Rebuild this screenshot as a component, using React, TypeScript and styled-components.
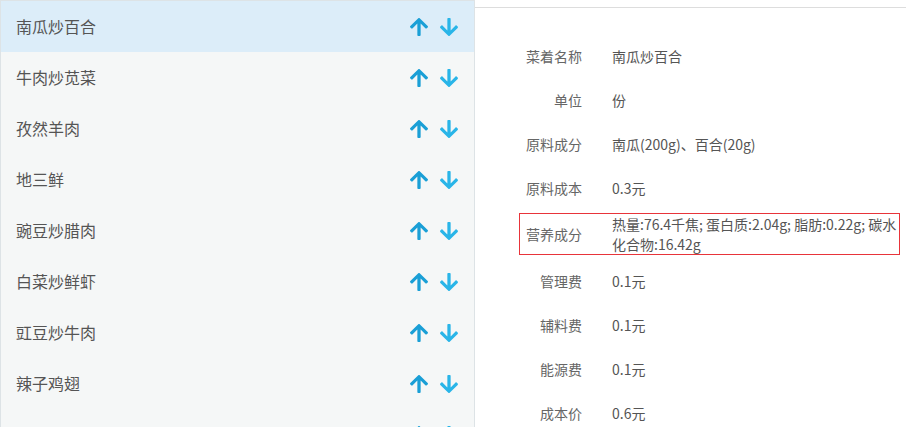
import React from "react";
import styled, { createGlobalStyle } from "styled-components";

const Global = createGlobalStyle`
  html, body { margin: 0; padding: 0; background: #fff; overflow: hidden; }
  body { font-family: "Noto Sans CJK SC", "Noto Sans", sans-serif; }
`;

const Page = styled.div`
  display: flex;
  width: 906px;
  height: 427px;
  overflow: hidden;
`;

const ListPanel = styled.div`
  width: 473px;
  flex: none;
  background: #f5f7f7;
  border: 1px solid #dde3e6;
  border-bottom: none;
  display: flex;
  flex-direction: column;
`;

const Item = styled.div<{ $active?: boolean }>`
  height: 51px;
  flex: none;
  box-sizing: border-box;
  display: flex;
  align-items: center;
  padding: 0 16px 2px 15px;
  background: ${(p) => (p.$active ? "#dcedf9" : "transparent")};
`;

const ItemName = styled.span`
  flex: 1;
  font-size: 16px;
  color: #555;
`;

const ArrowBtn = styled.span<{ $color: string }>`
  display: inline-flex;
  width: 18px;
  height: 18px;
  margin-left: 12px;
  margin-top: 2px;
  color: ${(p) => p.$color};
  svg { width: 18px; height: 18px; display: block; }
`;

const DetailPanel = styled.div`
  flex: 1;
  display: flex;
  flex-direction: column;
`;

const TopBar = styled.div`
  height: 7px;
  border-bottom: 1px solid #dddddd;
  flex: none;
`;

const Form = styled.div`
  display: flex;
  flex-direction: column;
  padding: 26px 0 0 44px;
`;

const Row = styled.div<{ $highlight?: boolean }>`
  display: flex;
  width: ${(p) => (p.$highlight ? "379px" : "381px")};
  font-size: 14px;
  line-height: 20px;
  padding: ${(p) => (p.$highlight ? "0" : "12px 0")};
  margin: ${(p) => (p.$highlight ? "3px 0 4px" : "0")};
  border: ${(p) => (p.$highlight ? "1px solid #e8343a" : "none")};
`;

const Label = styled.div<{ $highlight?: boolean }>`
  width: ${(p) => (p.$highlight ? "62px" : "63px")};
  flex: none;
  text-align: right;
  color: #666;
  align-self: ${(p) => (p.$highlight ? "center" : "auto")};
`;

const Value = styled.div`
  flex: 1;
  margin-left: 30px;
  color: #555;
  padding-right: 2px;
`;

const ArrowUp = () => (
  <svg viewBox="5 32 438 448" preserveAspectRatio="none">
    <path
      fill="currentColor"
      d="M34.9 289.5l-22.2-22.2c-9.4-9.4-9.4-24.6 0-33.9L207 39c9.4-9.4 24.6-9.4 33.9 0l194.3 194.3c9.4 9.4 9.4 24.6 0 33.9L413 289.4c-9.5 9.5-25 9.3-34.3-.4L264 168.6V456c0 13.3-10.7 24-24 24h-32c-13.3 0-24-10.7-24-24V168.6L69.2 289.1c-9.3 9.8-24.8 10-34.3.4z"
    />
  </svg>
);

const ArrowDown = () => (
  <svg viewBox="5 32 438 448" preserveAspectRatio="none">
    <path
      fill="currentColor"
      d="M413.1 222.5l22.2 22.2c9.4 9.4 9.4 24.6 0 33.9L241 473c-9.4 9.4-24.6 9.4-33.9 0L12.7 278.6c-9.4-9.4-9.4-24.6 0-33.9l22.2-22.2c9.5-9.5 25-9.3 34.3.4L184 343.4V56c0-13.3 10.7-24 24-24h32c13.3 0 24 10.7 24 24v287.4l114.8-120.5c9.3-9.8 24.8-10 34.3-.4z"
    />
  </svg>
);

const dishes = [
  "南瓜炒百合",
  "牛肉炒苋菜",
  "孜然羊肉",
  "地三鲜",
  "豌豆炒腊肉",
  "白菜炒鲜虾",
  "豇豆炒牛肉",
  "辣子鸡翅",
  "青椒土豆丝",
];

const fields: { label: string; value: string; highlight?: boolean }[] = [
  { label: "菜着名称", value: "南瓜炒百合" },
  { label: "单位", value: "份" },
  { label: "原料成分", value: "南瓜(200g)、百合(20g)" },
  { label: "原料成本", value: "0.3元" },
  { label: "营养成分", value: "热量:76.4千焦; 蛋白质:2.04g; 脂肪:0.22g; 碳水化合物:16.42g", highlight: true },
  { label: "管理费", value: "0.1元" },
  { label: "辅料费", value: "0.1元" },
  { label: "能源费", value: "0.1元" },
  { label: "成本价", value: "0.6元" },
];

export default function App() {
  return (
    <>
      <Global />
      <Page>
        <ListPanel>
          {dishes.map((d, i) => (
            <Item key={d} $active={i === 0}>
              <ItemName>{d}</ItemName>
              <ArrowBtn $color="#1a9fd6">
                <ArrowUp />
              </ArrowBtn>
              <ArrowBtn $color="#29b5e8">
                <ArrowDown />
              </ArrowBtn>
            </Item>
          ))}
        </ListPanel>
        <DetailPanel>
          <TopBar />
          <Form>
            {fields.map((f) => (
              <Row key={f.label} $highlight={f.highlight}>
                <Label $highlight={f.highlight}>{f.label}</Label>
                <Value>{f.value}</Value>
              </Row>
            ))}
          </Form>
        </DetailPanel>
      </Page>
    </>
  );
}
